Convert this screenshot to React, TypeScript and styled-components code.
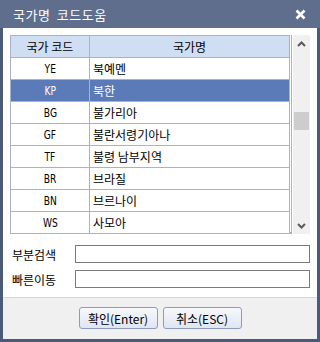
import React from 'react';
import styled, { createGlobalStyle } from 'styled-components';

const GlobalStyle = createGlobalStyle`
  body {
    margin: 0;
    font-family: "Noto Sans CJK KR", "Noto Sans", sans-serif;
    font-size: 12px;
    color: #000;
  }
`;

const Window = styled.div`
  width: 320px;
  height: 342px;
  box-sizing: border-box;
  display: flex;
  flex-direction: column;
  background: #4b5a79;
  padding: 0 3px 3px;
`;

const TitleBar = styled.div`
  height: 28px;
  margin: 0 -3px;
  padding: 0 14px 0 13px;
  display: flex;
  align-items: center;
  justify-content: space-between;
  background: #5f6e8d;
  color: #fff;
  font-size: 13px;
  letter-spacing: 0.5px;
  word-spacing: 3px;
`;

const CloseButton = styled.svg`
  width: 11px;
  height: 11px;
  margin-top: 1px;
`;

const Body = styled.div`
  flex: 1;
  background: #fff;
  padding: 7px 7px 0;
  display: flex;
  flex-direction: column;
`;

const ListBox = styled.div`
  display: flex;
  gap: 1px;
  height: 199px;
`;

const Table = styled.div`
  flex: 1;
  border: 1px solid #a9b2c6;
  border-bottom-width: 2px;
  border-top: none;
  display: flex;
  flex-direction: column;
`;

const Rows = styled.div`
  border-right: 1px solid #a9b2c6;
  margin-right: 1px;
`;

const Row = styled.div<{ $head?: boolean; $selected?: boolean }>`
  display: grid;
  grid-template-columns: 79px 1fr;
  height: 21px;
  border-bottom: 1px solid #a9b2c6;
  border-top: ${p => (p.$head ? '1px solid #a9b2c6' : 'none')};
  background: ${p => (p.$head ? '#cfdef3' : p.$selected ? '#5b7bb8' : '#fff')};
  color: ${p => (p.$selected ? '#fff' : '#000')};
`;

const Cell = styled.div<{ $center?: boolean; $divider?: boolean }>`
  display: flex;
  align-items: center;
  justify-content: ${p => (p.$center ? 'center' : 'flex-start')};
  padding-left: ${p => (p.$center ? '0' : '3px')};
  border-right: ${p => (p.$divider ? '1px solid #a9b2c6' : 'none')};
  white-space: nowrap;
  overflow: hidden;
`;

const Code = styled.span`
  font-family: "DejaVu Sans Condensed", "Liberation Sans", sans-serif;
  font-size: 13px;
  transform: scaleX(0.78);
`;

const ScrollBar = styled.div`
  width: 17px;
  background: #f0f0f0;
  display: flex;
  flex-direction: column;
  align-items: center;
  justify-content: space-between;
`;

const ArrowBox = styled.div`
  height: 17px;
  width: 17px;
  display: flex;
  align-items: center;
  justify-content: center;
`;

const ThumbTrack = styled.div`
  flex: 1;
  width: 100%;
  padding-top: 60px;
  box-sizing: border-box;
`;

const Thumb = styled.div`
  width: 15px;
  height: 18px;
  margin: 0 auto;
  background: #cdcdcd;
`;

const Field = styled.div<{ $first?: boolean }>`
  display: flex;
  align-items: center;
  margin-top: ${p => (p.$first ? '11px' : '7px')};
`;

const Label = styled.div`
  width: 63px;
  padding-left: 2px;
  font-size: 12px;
`;

const Input = styled.input`
  flex: 1;
  height: 18px;
  box-sizing: border-box;
  border: 1px solid #7a7a7a;
  outline: none;
  padding: 0 3px;
  font: inherit;
`;

const Footer = styled.div`
  height: 42px;
  box-sizing: border-box;
  border-top: 1px solid #d6d6d6;
  background: #f0f0f0;
  display: flex;
  align-items: center;
  justify-content: center;
  gap: 5px;
  padding-bottom: 1px;
  margin: 9px -7px 0;
`;

const Button = styled.button<{ $w: number }>`
  width: ${p => p.$w}px;
  height: 22px;
  border: 1px solid #8d9cbc;
  border-radius: 3px;
  background: linear-gradient(#f6f8fc, #dfe6f1);
  font-family: "Noto Sans CJK KR", "Liberation Sans", sans-serif;
  font-size: 12px;
  color: #000;
  padding: 0;
`;

const rows = [
  ['YE', '북예멘'],
  ['KP', '북한'],
  ['BG', '불가리아'],
  ['GF', '불란서령기아나'],
  ['TF', '불령 남부지역'],
  ['BR', '브라질'],
  ['BN', '브르나이'],
  ['WS', '사모아'],
];

function Chevron({ up }: { up?: boolean }) {
  return (
    <svg width="9" height="6" viewBox="0 0 9 6">
      <polyline
        points={up ? '1,5 4.5,1.5 8,5' : '1,1 4.5,4.5 8,1'}
        fill="none"
        stroke="#5a5a5a"
        strokeWidth="2"
      />
    </svg>
  );
}

export default function App() {
  return (
    <>
      <GlobalStyle />
      <Window>
        <TitleBar>
          <span>국가명 코드도움</span>
          <CloseButton viewBox="0 0 11 11">
            <path d="M1.5 1.5 L9.5 9.5 M9.5 1.5 L1.5 9.5" stroke="#fff" strokeWidth="2.6" />
          </CloseButton>
        </TitleBar>
        <Body>
          <ListBox>
            <Table>
              <Rows>
                <Row $head>
                  <Cell $center $divider>국가 코드</Cell>
                  <Cell $center>국가명</Cell>
                </Row>
                {rows.map(([code, name]) => (
                  <Row key={code} $selected={code === 'KP'}>
                    <Cell $center $divider>
                      <Code>{code}</Code>
                    </Cell>
                    <Cell>{name}</Cell>
                  </Row>
                ))}
              </Rows>
            </Table>
            <ScrollBar>
              <ArrowBox>
                <Chevron up />
              </ArrowBox>
              <ThumbTrack>
                <Thumb />
              </ThumbTrack>
              <ArrowBox>
                <Chevron />
              </ArrowBox>
            </ScrollBar>
          </ListBox>
          <Field $first>
            <Label>부분검색</Label>
            <Input />
          </Field>
          <Field>
            <Label>빠른이동</Label>
            <Input />
          </Field>
          <Footer>
            <Button $w={79}>확인(Enter)</Button>
            <Button $w={79}>취소(ESC)</Button>
          </Footer>
        </Body>
      </Window>
    </>
  );
}
